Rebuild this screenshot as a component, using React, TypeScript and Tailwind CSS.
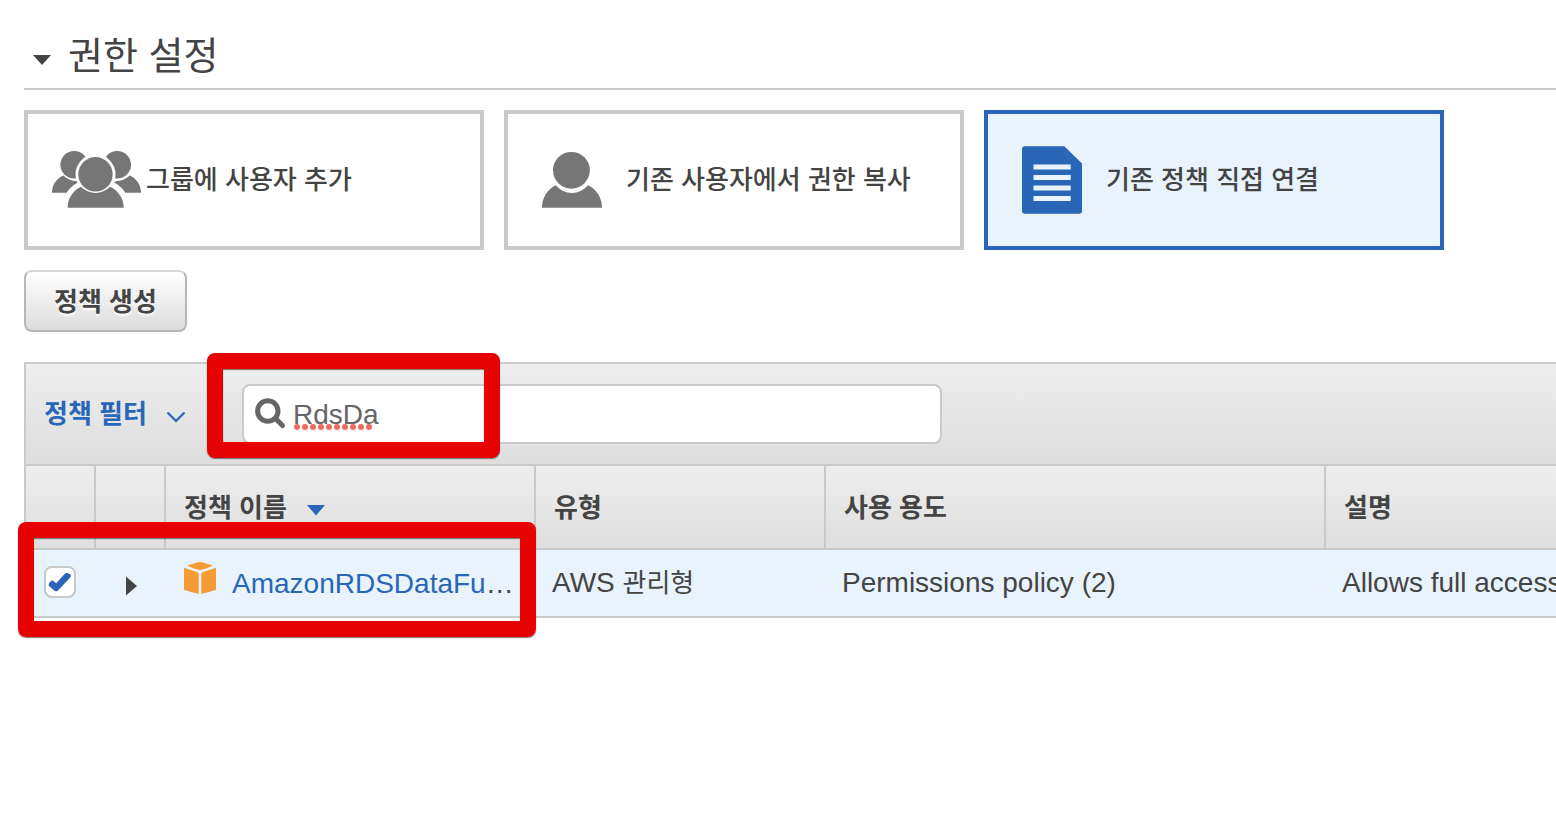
import { useState } from "react";
import type { ReactNode } from "react";

const GroupIcon = () => (
  <svg className="h-[72px] w-[90px] shrink-0 text-[#767676]" viewBox="0 0 90 72" fill="currentColor" aria-hidden="true">
    <circle cx="22.2" cy="20.8" r="13.8" />
    <circle cx="65.2" cy="20.8" r="13.8" />
    <path d="M0 48.7C0 41 4.5 34.3 11.3 31.5C15 35 19.5 37 24.5 37L26 38.4C21 41 17 44.5 14.7 48.7Z" />
    <path d="M89 48.7C89 41 84.5 34.3 77.7 31.5C74 35 69.5 37 64.5 37L62 38.4C67 41 71 44.5 73.3 48.7Z" />
    <circle cx="43.5" cy="30.3" r="20" className="fill-white" />
    <circle cx="43.5" cy="30.3" r="17.2" />
    <path d="M15.7 63.7C15.7 54.5 21 46.3 29 42.7A20 20 0 0 0 58 42.7C66.4 46.5 71.7 54.5 71.7 63.7Z" />
  </svg>
);

const UserIcon = () => (
  <svg className="h-[72px] w-[90px] shrink-0 text-[#767676]" viewBox="0 0 90 72" fill="currentColor" aria-hidden="true">
    <circle cx="39.4" cy="26.3" r="18.4" />
    <path d="M10 63.7C10 54 15 45.5 23.7 41.3A21 21 0 0 0 56 41.3C65 45.5 70 54 70 63.7Z" />
  </svg>
);

const PolicyIcon = () => (
  <svg className="h-[72px] w-[90px] shrink-0 text-[#2a66b7]" viewBox="0 0 90 72" fill="currentColor" aria-hidden="true">
    <path d="M13 2.2H52.3L70 19.5V67Q70 69.8 67 69.8H13Q10 69.8 10 67V5.2Q10 2.2 13 2.2Z" />
    <path
      className="fill-[#e8f3fd]"
      d="M21.5 20.5h37.2v5h-37.2zM21.5 31h37.2v5h-37.2zM21.5 41.5h37.2v5h-37.2zM21.5 52h37.2v5h-37.2z"
    />
  </svg>
);

const options: { id: string; label: string; icon: ReactNode }[] = [
  { id: "group", label: "그룹에 사용자 추가", icon: <GroupIcon /> },
  { id: "copy", label: "기존 사용자에서 권한 복사", icon: <UserIcon /> },
  { id: "attach", label: "기존 정책 직접 연결", icon: <PolicyIcon /> },
];

const headCell =
  "border-r-2 border-b-2 border-[#c9c9c9] px-[18px] pt-0.5 text-left text-[26px] font-bold whitespace-nowrap last:border-r-0";

export default function App() {
  const [selected, setSelected] = useState("attach");
  const [query, setQuery] = useState("RdsDa");
  const [checked, setChecked] = useState(true);

  return (
    <main className="min-h-screen overflow-hidden bg-white pt-6 pl-6 font-['Liberation_Sans','Noto_Sans_CJK_KR',sans-serif] text-[28px] text-[#444]">
      <h2 className="border-b-2 border-[#c9c9c9]">
        <button type="button" className="flex h-16 items-center gap-4 pl-2 text-[38px]">
          <svg className="mt-2 h-3 w-5" viewBox="0 0 20 12" fill="currentColor" aria-hidden="true">
            <path d="M1 1H19L10 11Z" />
          </svg>
          권한 설정
        </button>
      </h2>

      <div className="mt-5 flex gap-5">
        {options.map((o) => (
          <button
            key={o.id}
            type="button"
            aria-pressed={selected === o.id}
            onClick={() => setSelected(o.id)}
            className={
              "flex h-[140px] w-[460px] shrink-0 items-center gap-1 border-4 pl-6 text-[26px] font-medium " +
              (selected === o.id ? "border-[#2a66b7] bg-[#e8f3fd]" : "border-[#c9c9c9] bg-white")
            }
          >
            {o.icon}
            {o.label}
          </button>
        ))}
      </div>

      <button
        type="button"
        className="mt-5 h-[62px] rounded-lg border-2 border-[#b7b7b7] border-t-[#d8d8d8] bg-linear-to-b from-white to-[#dcdcdc] px-7 pt-0.5 text-[26px] font-bold [text-shadow:0_2px_2px_#fff]"
      >
        정책 생성
      </button>

      <section className="mt-[30px] border-t-2 border-l-2 border-[#c9c9c9]">
        <div className="relative flex h-[102px] items-center border-b-2 border-[#c9c9c9] bg-linear-to-b from-[#eee] to-[#dedede] pl-[18px]">
          <button type="button" className="flex w-[198px] items-center gap-[19px] text-[26px] font-bold text-[#2a66b7]">
            정책 필터
            <svg className="mt-1.5 h-3 w-5" viewBox="0 0 20 12" fill="none" stroke="currentColor" strokeWidth="2.2" aria-hidden="true">
              <path d="M1.5 1.5L10 10L18.5 1.5" />
            </svg>
          </button>
          <label className="relative flex h-[60px] w-[700px] items-center gap-1.5 rounded-lg border-2 border-[#c9c9c9] bg-white pl-[11px] text-[#666]">
            <svg className="h-8 w-8 shrink-0" viewBox="0 0 32 32" fill="none" stroke="currentColor" aria-hidden="true">
              <circle cx="12.8" cy="13" r="10.2" strokeWidth="5" />
              <path d="M20.5 20.5L27.5 27.5" strokeWidth="5" strokeLinecap="round" />
            </svg>
            <input
              type="text"
              aria-label="정책 검색"
              spellCheck={false}
              value={query}
              onChange={(e) => setQuery(e.target.value)}
              className="h-14 min-w-0 flex-1 bg-transparent pt-0.5 outline-none"
            />
            <svg className="absolute top-[38px] left-[50px] h-[6px] w-20" viewBox="0 0 80 6" fill="#ee6a5f" aria-hidden="true">
              {[3, 11, 19, 27, 35, 43, 51, 59, 67, 75].map((x) => (
                <circle key={x} cx={x} cy="3" r="3" />
              ))}
            </svg>
          </label>
          <div className="pointer-events-none absolute top-[-11px] left-[181px] h-[105px] w-[293px] rounded-lg border-16 border-[#e60202] shadow-[0_1px_1px_rgba(0,0,0,0.5),inset_0_1px_1px_rgba(0,0,0,0.5)]" />
        </div>

        <div className="relative">
          <table className="w-full table-fixed border-separate border-spacing-0">
            <colgroup>
              <col className="w-[70px]" />
              <col className="w-[70px]" />
              <col className="w-[370px]" />
              <col className="w-[290px]" />
              <col className="w-[500px]" />
              <col />
            </colgroup>
            <thead>
              <tr className="h-[84px] bg-linear-to-b from-[#eee] to-[#dedede]">
                <th className={headCell} aria-label="선택" />
                <th className={headCell} aria-label="세부 정보" />
                <th className={headCell} aria-sort="descending">
                  <button type="button" className="flex items-center gap-[19px]">
                    정책 이름
                    <svg className="mt-1 h-3 w-5 text-[#2a66b7]" viewBox="0 0 20 12" fill="currentColor" aria-hidden="true">
                      <path d="M1 1H19L10 11.5Z" />
                    </svg>
                  </button>
                </th>
                <th className={headCell}>유형</th>
                <th className={headCell}>사용 용도</th>
                <th className={headCell}>설명</th>
              </tr>
            </thead>
            <tbody>
              <tr className="h-[68px] bg-[#e8f3fd] whitespace-nowrap *:border-b-2 *:border-[#c9c9c9]">
                <td className="pl-[18px]">
                  <label className="relative mb-0.5 block h-8 w-8">
                    <input
                      type="checkbox"
                      aria-label="AmazonRDSDataFu… 선택"
                      checked={checked}
                      onChange={(e) => setChecked(e.target.checked)}
                      className="block h-8 w-8 appearance-none rounded-lg border-2 border-[#c9c9c9] bg-white"
                    />
                    {checked && (
                      <svg className="pointer-events-none absolute inset-0 h-8 w-8" viewBox="0 0 32 32" fill="#2a66b7" aria-hidden="true">
                        <path d="M4.8 17.4L7 15Q8.2 14 9.4 15L12.2 17.3L20.6 8Q22 6.6 23.6 7L26.2 8.2Q27.4 9.4 26.6 11L14 24.4Q12.4 26 10.6 24.8L5.4 20.4Q4 19 4.8 17.4Z" />
                      </svg>
                    )}
                  </label>
                </td>
                <td className="pl-[30px]">
                  <button type="button" aria-label="펼치기" className="mt-1.5 block">
                    <svg className="h-5 w-3" viewBox="0 0 12 20" fill="currentColor" aria-hidden="true">
                      <path d="M0 0.5L11 10L0 19.5Z" />
                    </svg>
                  </button>
                </td>
                <td className="pl-[18px]">
                  <div className="flex items-center gap-4">
                    <svg className="mb-2.5 h-8 w-8 shrink-0" viewBox="0 0 32 32" fill="#f59c36" aria-hidden="true">
                      <path d="M14 0.3Q16 -0.1 18 0.3L29 3.6Q23 7 16 8.2Q9 7 3 3.6Z" />
                      <path d="M0 6.2Q1.2 5.8 3 6.8L12.5 9.8Q14.7 10.5 14.7 12V32L0 28Z" />
                      <path d="M32 6.2Q30.8 5.8 29 6.8L19.5 9.8Q17.3 10.5 17.3 12V32L32 28Z" />
                    </svg>
                    <span className="pt-0.5">
                      <a href="#policy" className="text-[#2a66b7]">
                        AmazonRDSDataFu
                      </a>
                      …
                    </span>
                  </div>
                </td>
                <td className="pl-4">
                  AWS <span className="text-[26px]">관리형</span>
                </td>
                <td className="pl-4">Permissions policy (2)</td>
                <td className="overflow-hidden pl-4">Allows full access</td>
              </tr>
            </tbody>
          </table>
          <div className="pointer-events-none absolute top-14 left-[-8px] h-[115px] w-[518px] rounded-lg border-16 border-[#e60202] shadow-[0_1px_1px_rgba(0,0,0,0.5),inset_0_1px_1px_rgba(0,0,0,0.5)]" />
        </div>
      </section>
    </main>
  );
}
